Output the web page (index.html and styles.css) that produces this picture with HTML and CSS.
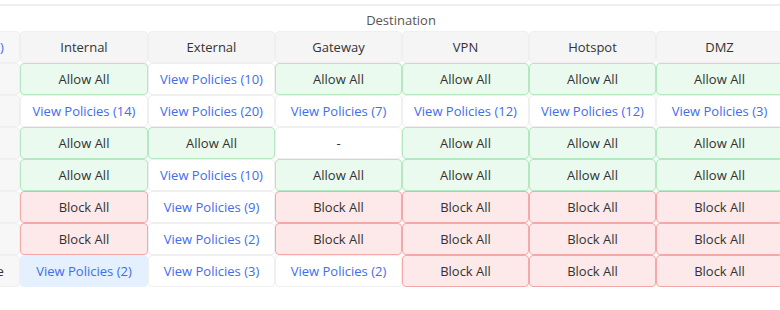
FILE: index.html
```html
<!DOCTYPE html>
<html>
<head>
<meta charset="utf-8">
<link rel="stylesheet" href="styles.css">
</head>
<body>
<div class="panel">
  <div class="dest-title">Destination</div>
  <div class="viewport">
    <div class="matrix">
      <div class="cell head side"><span class="link">Source Zones (Sort)</span></div>
      <div class="cell head">Internal</div>
      <div class="cell head">External</div>
      <div class="cell head">Gateway</div>
      <div class="cell head">VPN</div>
      <div class="cell head">Hotspot</div>
      <div class="cell head">DMZ</div>

      <div class="cell side">Internal</div>
      <div class="cell allow">Allow All</div>
      <div class="cell view">View Policies (10)</div>
      <div class="cell allow">Allow All</div>
      <div class="cell allow">Allow All</div>
      <div class="cell allow">Allow All</div>
      <div class="cell allow">Allow All</div>

      <div class="cell side">External</div>
      <div class="cell view">View Policies (14)</div>
      <div class="cell view">View Policies (20)</div>
      <div class="cell view">View Policies (7)</div>
      <div class="cell view">View Policies (12)</div>
      <div class="cell view">View Policies (12)</div>
      <div class="cell view">View Policies (3)</div>

      <div class="cell side">Gateway</div>
      <div class="cell allow">Allow All</div>
      <div class="cell allow">Allow All</div>
      <div class="cell none">-</div>
      <div class="cell allow">Allow All</div>
      <div class="cell allow">Allow All</div>
      <div class="cell allow">Allow All</div>

      <div class="cell side">VPN</div>
      <div class="cell allow">Allow All</div>
      <div class="cell view">View Policies (10)</div>
      <div class="cell allow">Allow All</div>
      <div class="cell allow">Allow All</div>
      <div class="cell allow">Allow All</div>
      <div class="cell allow">Allow All</div>

      <div class="cell side">Hotspot</div>
      <div class="cell block">Block All</div>
      <div class="cell view">View Policies (9)</div>
      <div class="cell block">Block All</div>
      <div class="cell block">Block All</div>
      <div class="cell block">Block All</div>
      <div class="cell block">Block All</div>

      <div class="cell side">DMZ</div>
      <div class="cell block">Block All</div>
      <div class="cell view">View Policies (2)</div>
      <div class="cell block">Block All</div>
      <div class="cell block">Block All</div>
      <div class="cell block">Block All</div>
      <div class="cell block">Block All</div>

      <div class="cell side">Guest Wireless Zone</div>
      <div class="cell view active">View Policies (2)</div>
      <div class="cell view">View Policies (3)</div>
      <div class="cell view">View Policies (2)</div>
      <div class="cell block">Block All</div>
      <div class="cell block">Block All</div>
      <div class="cell block">Block All</div>
    </div>
  </div>
</div>
</body>
</html>
```

FILE: styles.css
```css
html, body {
  margin: 0;
  padding: 0;
  background: #ffffff;
}
body {
  font-family: "Open Sans", "Noto Sans", sans-serif;
  font-size: 13px;
  color: #333333;
  overflow: hidden;
  width: 780px;
  height: 310px;
}
.panel {
  margin-top: 4px;
  border-top: 2px solid #eeeeee;
}
.dest-title {
  height: 25px;
  display: flex;
  align-items: center;
  justify-content: center;
  padding-left: 22px;
  padding-top: 3px;
  box-sizing: border-box;
  color: #555555;
  font-size: 13px;
}
.viewport {
  overflow: hidden;
  width: 780px;
}
.matrix {
  display: grid;
  grid-template-columns: 150px 128px repeat(5, 127px);
  grid-auto-rows: 32px;
  width: 930px;
  margin-left: -130px;
}
.cell {
  box-sizing: border-box;
  border: 1px solid #efefef;
  border-radius: 4px;
  display: flex;
  align-items: center;
  justify-content: center;
  padding-bottom: 1px;
  white-space: nowrap;
  overflow: hidden;
  background: #ffffff;
}
.head {
  background: #f5f5f5;
  color: #333333;
}
.side {
  background: #f7f7f7;
  justify-content: flex-start;
  padding-left: 9px;
}
.side.head {
  padding-left: 15px;
}
.link, .view {
  color: #3f6cf0;
}
.allow {
  background: #eafaee;
  border-color: #b3e8c0;
}
.block {
  background: #fde9e9;
  border-color: #f5a8a8;
}
.view.active {
  background: #e4f0fd;
  border-color: #e4f0fd;
}
.none {
  color: #333333;
}
```
